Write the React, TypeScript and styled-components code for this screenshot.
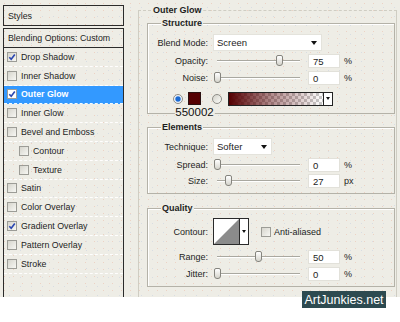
import React from "react";
import styled, { createGlobalStyle } from "styled-components";

const PANEL = "#eeede6";

const GlobalStyle = createGlobalStyle`
  html, body {
    margin: 0;
    padding: 0;
    background: #fff;
  }
  body {
    font-family: "Liberation Sans", Arial, sans-serif;
    font-size: 9px;
    color: #1d1d1d;
  }
  * {
    box-sizing: border-box;
  }
`;

const Page = styled.div`
  position: relative;
  width: 400px;
  height: 322px;
  background: #fff;
  overflow: hidden;
`;

const Window = styled.div`
  display: flex;
  gap: 14px;
  height: 297px;
  padding: 5px 3px 0 3px;
  background-color: ${PANEL};
  background-image: radial-gradient(rgba(232, 160, 130, 0.35) 0.5px, transparent 0.9px),
    radial-gradient(rgba(150, 170, 220, 0.25) 0.5px, transparent 0.9px);
  background-size: 9px 7px, 11px 9px;
  background-position: 0 0, 4px 3px;
`;

/* ---------- left styles list ---------- */

const Sidebar = styled.div`
  width: 121px;
  display: flex;
  flex-direction: column;
  gap: 2px;
  font-size: 8.8px;
`;

const StylesBox = styled.div`
  height: 21px;
  border: 1px solid #2b2b2b;
  padding-left: 4px;
  display: flex;
  align-items: center;
`;

const ListBox = styled.div`
  flex: 1;
  border: 1px solid #2b2b2b;
  border-bottom: none;
`;

const ListHeader = styled.div`
  height: 19px;
  border-bottom: 1px solid #2b2b2b;
  padding-left: 4px;
  display: flex;
  align-items: center;
`;

const Row = styled.div<{ $active?: boolean; $indent?: boolean }>`
  height: 18.8px;
  display: flex;
  align-items: center;
  gap: 4px;
  padding-left: ${(p) => (p.$indent ? 15 : 3)}px;
  border-bottom: 1px dashed rgba(255, 255, 255, 0.95);
  background: ${(p) => (p.$active ? "#3399ff" : "transparent")};
  color: ${(p) => (p.$active ? "#fff" : "#1d1d1d")};
  font-weight: ${(p) => (p.$active ? "bold" : "normal")};
`;

const Box = styled.span<{ $white?: boolean }>`
  width: 10px;
  height: 10px;
  flex-shrink: 0;
  border: 1px solid #9c9c96;
  background: ${(p) => (p.$white ? "#fff" : "linear-gradient(135deg, #d6d5cd, #f7f7f3)")};
  display: flex;
  align-items: center;
  justify-content: center;
`;

const Check = ({ on, white }: { on?: boolean; white?: boolean }) => (
  <Box $white={white}>
    {on && (
      <svg width="8" height="8" viewBox="0 0 8 8">
        <path d="M1.3 4.2 L3.2 6.2 L6.8 1.4" fill="none" stroke="#2b47b0" strokeWidth="1.6" />
      </svg>
    )}
  </Box>
);

const styles = [
  { name: "Drop Shadow", on: true },
  { name: "Inner Shadow" },
  { name: "Outer Glow", on: true, active: true },
  { name: "Inner Glow" },
  { name: "Bevel and Emboss" },
  { name: "Contour", indent: true },
  { name: "Texture", indent: true },
  { name: "Satin" },
  { name: "Color Overlay" },
  { name: "Gradient Overlay", on: true },
  { name: "Pattern Overlay" },
  { name: "Stroke" },
];

/* ---------- right settings ---------- */

const Frame = styled.div`
  position: relative;
  flex: 1;
  margin-top: 5px;
  border: 1px solid #cfcdc3;
  border-top-style: dashed;
  border-bottom: none;
  padding: 12px 1px 0 8px;
  display: flex;
  flex-direction: column;
`;

const Title = styled.span`
  position: absolute;
  top: -6px;
  left: 13px;
  padding: 0 1px;
  font-weight: bold;
  line-height: 11px;
  background: ${PANEL};
`;

const Group = styled.div<{ $gap?: number; $top: number; $bottom: number }>`
  position: relative;
  margin-top: ${(p) => p.$gap ?? 0}px;
  padding: ${(p) => p.$top}px 0 ${(p) => p.$bottom}px;
  border: 1px solid #b4b2a8;
  box-shadow: inset 1px 1px 0 #fff;
  display: flex;
  flex-direction: column;
`;

const Legend = styled.span`
  position: absolute;
  top: -6px;
  left: 13px;
  padding: 0 1px;
  font-weight: bold;
  line-height: 11px;
  background: ${PANEL};
`;

const Field = styled.div<{ $h: number; $mt?: number }>`
  height: ${(p) => p.$h}px;
  margin-top: ${(p) => p.$mt ?? 0}px;
  display: flex;
  align-items: center;
`;

const Label = styled.span`
  width: 60px;
  margin-right: 5px;
  text-align: right;
  white-space: nowrap;
`;

const Select = styled.div<{ $w: number }>`
  width: ${(p) => p.$w}px;
  height: 17px;
  background: #fff;
  border: 1px solid #e4e3dc;
  display: flex;
  align-items: center;
  justify-content: space-between;
  padding: 0 4px 0 3px;
  font-size: 9.5px;
`;

const Arrow = styled.span`
  width: 0;
  height: 0;
  border-left: 3.5px solid transparent;
  border-right: 3.5px solid transparent;
  border-top: 4px solid #111;
`;

const Slider = styled.div`
  position: relative;
  width: 88px;
  height: 12px;
  display: flex;
  align-items: center;
  padding: 0 1px 0 4px;
`;

const Track = styled.div`
  flex: 1;
  height: 2px;
  border-top: 1px solid #a9a8a0;
  border-bottom: 1px solid #fff;
`;

const Thumb = styled.span<{ $pos: number }>`
  position: absolute;
  top: 0;
  left: calc(4px + ${(p) => p.$pos} * 0.83px - 3.5px);
  width: 7px;
  height: 11px;
  border: 1px solid #85847e;
  border-radius: 2px 2px 3px 3px;
  background: linear-gradient(#ffffff, #d5d4cc);
`;

const Input = styled.div`
  width: 32px;
  height: 14px;
  margin-left: 7px;
  background: #fff;
  border: 1px solid #e2e1da;
  padding-left: 4px;
  display: flex;
  align-items: center;
  font-size: 9.5px;
`;

const Unit = styled.span`
  margin-left: 4px;
`;

const SliderRow = ({
  label,
  value,
  pos,
  unit,
  mt,
}: {
  label: string;
  value: string;
  pos: number;
  unit: string;
  mt?: number;
}) => (
  <Field $h={14} $mt={mt}>
    <Label>{label}</Label>
    <Slider>
      <Track />
      <Thumb $pos={pos} />
    </Slider>
    <Input>{value}</Input>
    <Unit>{unit}</Unit>
  </Field>
);

const ColorRow = styled.div`
  height: 15px;
  margin-top: 6px;
  padding-left: 25px;
  display: flex;
  align-items: center;
`;

const Radio = styled.span<{ $on?: boolean }>`
  width: 10px;
  height: 10px;
  border-radius: 50%;
  border: 1px solid #8f8e88;
  background: ${(p) =>
    p.$on
      ? "radial-gradient(circle, #1b6ad2 0 2.2px, #9cc0ee 2.8px, #eef2f8 3.4px)"
      : "linear-gradient(135deg, #d3d2ca, #fbfbf8)"};
`;

const SwatchWrap = styled.div`
  position: relative;
  margin: 0 11px 0 5px;
`;

const Swatch = styled.div`
  width: 13px;
  height: 13px;
  background: #550002;
  border: 1px solid #2a1010;
`;

const Hex = styled.span`
  position: absolute;
  top: 14px;
  left: 50%;
  transform: translateX(-50%);
  padding: 0 1px;
  font-size: 11.5px;
  line-height: 12px;
  color: #111;
  background: ${PANEL};
`;

const GradientPick = styled.div`
  width: 105px;
  height: 14px;
  margin-left: 6px;
  border: 1px solid #222;
  display: flex;
`;

const GradientFill = styled.div`
  flex: 1;
  background: linear-gradient(90deg, #550002, rgba(85, 0, 2, 0.45) 45%, rgba(85, 0, 2, 0) 100%),
    repeating-conic-gradient(#c9c9c9 0 25%, #ffffff 0 50%) 0 0 / 6px 6px;
`;

const DropPart = styled.div`
  width: 9px;
  border-left: 1px solid #222;
  background: #fff;
  display: flex;
  align-items: center;
  justify-content: center;
`;

const SmallArrow = styled.span`
  width: 0;
  height: 0;
  border-left: 2.5px solid transparent;
  border-right: 2.5px solid transparent;
  border-top: 3px solid #111;
`;

const ContourPick = styled.div`
  width: 36px;
  height: 27px;
  border: 1px solid #2a2a2a;
  display: flex;
  background: #fff;
`;

const ContourDrop = styled.div`
  width: 9px;
  border-left: 1px solid #2a2a2a;
  display: flex;
  align-items: center;
  justify-content: center;
`;

const CheckLabel = styled.span`
  margin-left: 12px;
  display: flex;
  align-items: center;
  gap: 3px;
`;

const Watermark = styled.div`
  position: absolute;
  left: 302px;
  top: 291px;
  width: 84px;
  height: 17px;
  background: #2d4a50;
  color: #fff;
  font-size: 12.5px;
  display: flex;
  align-items: center;
  justify-content: center;
`;

export default function App() {
  return (
    <Page>
      <GlobalStyle />
      <Window>
        <Sidebar>
          <StylesBox>Styles</StylesBox>
          <ListBox>
            <ListHeader>Blending Options: Custom</ListHeader>
            {styles.map((s) => (
              <Row key={s.name} $active={s.active} $indent={s.indent}>
                <Check on={s.on} white={s.active} />
                {s.name}
              </Row>
            ))}
          </ListBox>
        </Sidebar>

        <Frame>
          <Title>Outer Glow</Title>

          <Group $top={10} $bottom={7}>
            <Legend>Structure</Legend>
            <Field $h={17}>
              <Label>Blend Mode:</Label>
              <Select $w={109}>
                Screen
                <Arrow />
              </Select>
            </Field>
            <SliderRow label="Opacity:" value="75" pos={75} unit="%" mt={3} />
            <SliderRow label="Noise:" value="0" pos={0} unit="%" mt={3} />
            <ColorRow>
              <Radio $on />
              <SwatchWrap>
                <Swatch />
                <Hex>550002</Hex>
              </SwatchWrap>
              <Radio />
              <GradientPick>
                <GradientFill />
                <DropPart>
                  <SmallArrow />
                </DropPart>
              </GradientPick>
            </ColorRow>
          </Group>

          <Group $gap={13} $top={10} $bottom={5}>
            <Legend>Elements</Legend>
            <Field $h={17}>
              <Label>Technique:</Label>
              <Select $w={59}>
                Softer
                <Arrow />
              </Select>
            </Field>
            <SliderRow label="Spread:" value="0" pos={0} unit="%" mt={3} />
            <SliderRow label="Size:" value="27" pos={14} unit="px" mt={2} />
          </Group>

          <Group $gap={14} $top={9} $bottom={5}>
            <Legend>Quality</Legend>
            <Field $h={27}>
              <Label>Contour:</Label>
              <ContourPick>
                <svg width="25" height="25" viewBox="0 0 25 25">
                  <polygon points="0,25 25,0 25,25" fill="#8b8b8b" />
                </svg>
                <ContourDrop>
                  <SmallArrow />
                </ContourDrop>
              </ContourPick>
              <CheckLabel>
                <Check />
                Anti-aliased
              </CheckLabel>
            </Field>
            <SliderRow label="Range:" value="50" pos={50} unit="%" mt={5} />
            <SliderRow label="Jitter:" value="0" pos={0} unit="%" mt={3} />
          </Group>
        </Frame>
      </Window>
      <Watermark>ArtJunkies.net</Watermark>
    </Page>
  );
}
